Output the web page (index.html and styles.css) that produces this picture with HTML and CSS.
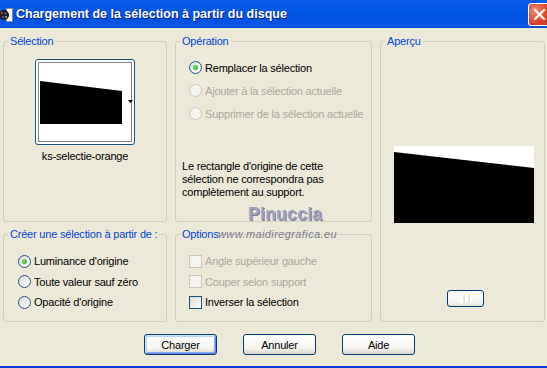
FILE: index.html
```html
<!DOCTYPE html>
<html lang="fr">
<head>
    <meta charset="UTF-8">
    <title>Chargement de la sélection à partir du disque</title>
    <link rel="stylesheet" href="styles.css">
</head>
<body>
    <div class="window">
        <div class="titlebar">
            <svg class="app-icon" width="14" height="16" viewBox="0 0 14 16">
                <rect x="7.5" y="1.5" width="6" height="13" fill="#fff" stroke="#8a8a8a"/>
                <circle cx="5" cy="8" r="5" fill="#1a1a2a"/>
                <circle cx="3" cy="6" r="1.2" fill="#d03030"/>
                <circle cx="6.5" cy="6.5" r="1.1" fill="#30b040"/>
                <circle cx="4" cy="10" r="1.1" fill="#3070e0"/>
                <circle cx="7" cy="10" r="0.9" fill="#e0c040"/>
            </svg>
            <span class="title">Chargement de la sélection à partir du disque</span>
            <span class="close">
                <svg width="21" height="21" viewBox="0 0 21 21">
                    <path d="M6 6 L15 15 M15 6 L6 15" stroke="#fff" stroke-width="2.2" stroke-linecap="square"/>
                </svg>
            </span>
        </div>

        <div class="client">
            <div class="groups">
                <fieldset class="group g-selection">
                    <legend>Sélection</legend>
                    <div class="thumb-btn">
                        <svg width="98" height="84" viewBox="0 0 98 84">
                            <rect x="2.5" y="2.5" width="93" height="79" fill="none" stroke="#000" stroke-dasharray="1 1"/>
                            <polygon points="4,21 86,31 86,64 4,64" fill="#000"/>
                            <polygon points="92,40 97,40 94.5,43" fill="#000"/>
                        </svg>
                    </div>
                    <div class="thumb-name">ks-selectie-orange</div>
                </fieldset>

                <fieldset class="group g-operation">
                    <legend>Opération</legend>
                    <div class="choices op-choices">
                        <div class="choice"><span class="radio checked"></span>Remplacer la sélection</div>
                        <div class="choice disabled"><span class="radio"></span>Ajouter à la sélection actuelle</div>
                        <div class="choice disabled"><span class="radio"></span>Supprimer de la sélection actuelle</div>
                    </div>
                    <p class="note">Le rectangle d'origine de cette<br>sélection ne correspondra pas<br>complètement au support.</p>
                </fieldset>

                <fieldset class="group g-preview">
                    <legend>Aperçu</legend>
                    <div class="preview">
                        <svg width="140" height="77" viewBox="0 0 140 77">
                            <rect width="140" height="77" fill="#fff"/>
                            <polygon points="0,6 140,22 140,77 0,77" fill="#000"/>
                        </svg>
                    </div>
                    <div class="preview-btn"><span class="preview-glyph"></span></div>
                </fieldset>

                <fieldset class="group g-create">
                    <legend>Créer une sélection à partir de :</legend>
                    <div class="choices low-choices create-choices">
                        <div class="choice"><span class="radio checked"></span>Luminance d'origine</div>
                        <div class="choice"><span class="radio"></span>Toute valeur sauf zéro</div>
                        <div class="choice"><span class="radio"></span>Opacité d'origine</div>
                    </div>
                </fieldset>

                <fieldset class="group g-options">
                    <legend>Options</legend>
                    <div class="choices low-choices option-choices">
                        <div class="choice disabled"><span class="check"></span>Angle supérieur gauche</div>
                        <div class="choice disabled"><span class="check"></span>Couper selon support</div>
                        <div class="choice"><span class="check"></span>Inverser la sélection</div>
                    </div>
                </fieldset>
            </div>

            <div class="buttons">
                <button class="btn default">Charger</button>
                <button class="btn">Annuler</button>
                <button class="btn">Aide</button>
            </div>
        </div>

        <!-- watermark over the dialog -->
        <div class="wm-name">Pinuccia</div>
        <div class="wm-url">www.maidiregrafica.eu</div>
    </div>
</body>
</html>
```

FILE: styles.css
```css
:root {
    --dialog-bg: #ece9d8;
    --group-border: #d0d0bf;
    --legend-color: #0046d5;
    --disabled-text: #aca899;
    --control-border: #1c5180;
    --button-border: #003c74;
}

body {
    margin: 0;
    font-family: "Liberation Sans", Arial, sans-serif;
    font-size: 11px;
    letter-spacing: -0.2px;
    color: #000;
    background-color: var(--dialog-bg);
}

.window {
    position: relative;
    width: 547px;
    height: 368px;
    display: flex;
    flex-direction: column;
    overflow: hidden;
    background-color: var(--dialog-bg);
    border-bottom: 2px solid #0a3bd6;
    box-sizing: border-box;
}

.titlebar {
    flex: none;
    height: 28px;
    display: flex;
    align-items: center;
    background: linear-gradient(to bottom, #0a5ee6 0%, #0559e6 20%, #0054e3 55%, #0253e0 80%, #0b5fe8 92%, #0046c8 100%);
}

.app-icon {
    flex: none;
    margin-left: -1px;
    margin-top: 1px;
}

.title {
    margin-left: 3px;
    font-weight: bold;
    font-size: 12.5px;
    letter-spacing: 0;
    color: #fff;
    text-shadow: 1px 1px 0 #0a1e8a;
    white-space: nowrap;
}

.close {
    flex: none;
    margin-left: auto;
    margin-right: -4px;
    width: 21px;
    height: 21px;
    border: 1px solid #fff;
    border-radius: 3px;
    background: radial-gradient(circle at 30% 30%, #f08a6a, #d9432a 60%, #c33518);
    display: flex;
}

.client {
    flex: 1;
    padding: 7px 0 0 3px;
}

.groups {
    display: grid;
    grid-template-columns: 164px 197px 165px;
    grid-template-rows: 187px 94px;
    gap: 6px 8px;
}

.group {
    margin: 0;
    padding: 0 6px;
    min-width: 0;
    border: 1px solid var(--group-border);
    border-radius: 3px;
    box-sizing: border-box;
}

.group legend {
    padding: 0 2px;
    margin-left: -2px;
    line-height: 13px;
    white-space: nowrap;
    color: var(--legend-color);
}

.g-selection { grid-column: 1; grid-row: 1; }
.g-operation { grid-column: 2; grid-row: 1; }
.g-preview { grid-column: 3; grid-row: 1 / span 2; }
.g-create { grid-column: 1; grid-row: 2; }
.g-options { grid-column: 2; grid-row: 2; }

.thumb-btn {
    width: 100px;
    height: 86px;
    margin: 11px auto 0;
    border: 1px solid var(--control-border);
    border-radius: 3px;
    background-color: #fff;
    box-sizing: border-box;
}

.thumb-btn svg {
    display: block;
}

.thumb-name {
    margin-top: 5px;
    text-align: center;
    line-height: 13px;
}

.choice {
    display: flex;
    align-items: center;
    gap: 3px;
    white-space: nowrap;
}

.op-choices {
    margin: 8px 0 0 7px;
}

.op-choices .choice {
    height: 23px;
}

.low-choices {
    margin-top: 10px;
}

.low-choices .choice {
    height: 20.5px;
}

.create-choices {
    margin-left: 8px;
}

.option-choices {
    margin-left: 7px;
}

.choice.disabled {
    color: var(--disabled-text);
}

.radio {
    position: relative;
    flex: none;
    width: 13px;
    height: 13px;
    border: 1px solid var(--control-border);
    border-radius: 50%;
    background: linear-gradient(135deg, #dcdbd5, #fcfcfb);
    box-sizing: border-box;
}

.radio.checked::after {
    content: "";
    position: absolute;
    left: 3px;
    top: 3px;
    width: 5px;
    height: 5px;
    border-radius: 50%;
    background: radial-gradient(circle at 40% 40%, #6fe06f, #21a121);
}

.check {
    flex: none;
    width: 13px;
    height: 13px;
    border: 1px solid var(--control-border);
    background: linear-gradient(135deg, #dcdbd5, #fcfcfb);
    box-sizing: border-box;
}

.disabled .radio,
.disabled .check {
    border-color: #cac8bb;
    background: #f4f3ee;
}

.note {
    margin: 35px 0 0;
    line-height: 13px;
}

.preview {
    width: 140px;
    height: 77px;
    margin: 98px 0 0 7px;
}

.preview svg {
    display: block;
}

.preview-btn {
    width: 37px;
    height: 17px;
    margin: 67px 0 0 60px;
    border: 1px solid var(--button-border);
    border-radius: 3px;
    background: linear-gradient(#ffffff, #f3f2ec 80%, #dedbd0);
    box-sizing: border-box;
    display: flex;
    justify-content: center;
    align-items: center;
}

.preview-glyph {
    width: 12px;
    height: 8px;
    background: repeating-linear-gradient(90deg, #fff 0 3px, #e4e2da 3px 5px);
}

.buttons {
    display: flex;
    gap: 26px;
    margin: 12px 0 0 141px;
}

.btn {
    width: 73px;
    height: 21px;
    padding: 0;
    border: 1px solid var(--button-border);
    border-radius: 3px;
    background: linear-gradient(#ffffff, #f4f3ee 70%, #e3e0d5 90%, #d6d0c5);
    font-family: "Liberation Sans", Arial, sans-serif;
    font-size: 11px;
    letter-spacing: -0.2px;
    color: #000;
}

.btn.default {
    box-shadow: inset 1px 1px 0 #cee7ff, inset -1px -1px 0 #6982ee, inset 2px 2px 0 #bcd4f6, inset -2px -2px 0 #89adf4;
}

.wm-name {
    position: absolute;
    left: 248px;
    top: 204px;
    font-family: "Liberation Sans", Arial, sans-serif;
    font-weight: bold;
    font-size: 17.5px;
    letter-spacing: 0.3px;
    color: #a2a2bc;
    text-shadow: 1px 1px 0 #7c7c96;
}

.wm-url {
    position: absolute;
    left: 218px;
    top: 228px;
    font-style: italic;
    font-size: 11px;
    letter-spacing: 0.4px;
    color: #7a7a92;
}
```
